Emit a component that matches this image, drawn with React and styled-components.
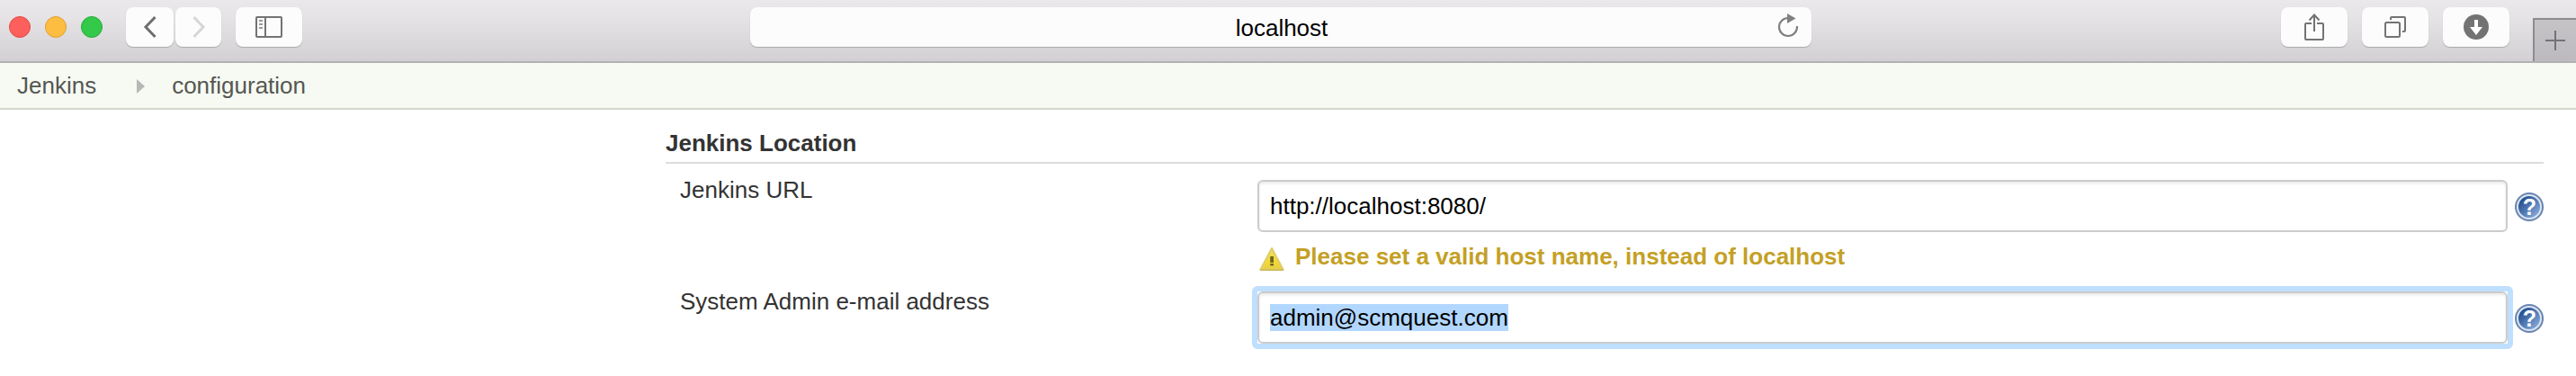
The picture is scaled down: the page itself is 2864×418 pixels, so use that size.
import React from 'react';
import styled, { createGlobalStyle } from 'styled-components';

const GlobalStyle = createGlobalStyle`
  * {
    box-sizing: border-box;
  }
  body {
    margin: 0;
    background: #fff;
    color: #333;
    font-family: "Liberation Sans", Arial, sans-serif;
    font-size: 26px;
    line-height: 30px;
  }
  svg {
    display: block;
  }
`

const SidebarIcon = () => (
    <svg width="30" height="24" viewBox="0 0 30 24" fill="none" stroke="#737373" strokeWidth="2">
        <rect x="1" y="1" width="28" height="22" rx="1" />
        <path d="M11 1V23" />
        <path d="M4 5H8M4 9H8M4 13H8" stroke="#999" />
    </svg>
)

const ReloadIcon = () => (
    <svg width="24" height="28" viewBox="0 0 24 28">
        <path d="M12 5A10 10 0 1 0 22 15V14" fill="none" stroke="#808080" strokeWidth="2.2" />
        <path d="M11 0L20.5 5.5L11 11Z" fill="#808080" />
    </svg>
)

const ShareIcon = () => (
    <svg width="22" height="30" viewBox="0 0 22 30" fill="none" stroke="#737373" strokeWidth="2">
        <path d="M8 11H2Q1 11 1 12V28Q1 29 2 29H20Q21 29 21 28V12Q21 11 20 11H14" />
        <path d="M11 20V2M5.5 7.5L11 1.5L16.5 7.5" />
    </svg>
)

const TabsIcon = () => (
    <svg width="24" height="24" viewBox="0 0 24 24" fill="none" stroke="#737373" strokeWidth="2">
        <rect x="1" y="7" width="16" height="16" rx="1.5" />
        <path d="M7 4V2Q7 1 8 1H22Q23 1 23 2V16Q23 17 22 17H20" />
    </svg>
)

const DownloadIcon = () => (
    <svg width="28" height="28" viewBox="0 0 28 28">
        <circle cx="14" cy="14" r="14" fill="#737373" />
        <path d="M12 6H16V14H21L14 23L7 14H12Z" fill="#fff" />
    </svg>
)

const WarningIcon = () => (
    <svg width="28" height="28" viewBox="0 0 28 28">
        <defs>
            <linearGradient id="warn" x1="0" y1="0" x2="0" y2="1">
                <stop offset="0" stopColor="#efdc6a" />
                <stop offset="0.6" stopColor="#f3da35" />
                <stop offset="1" stopColor="#e8cf42" />
            </linearGradient>
        </defs>
        <path d="M14 2L26.5 25.5H1.5Z" fill="url(#warn)" stroke="#e0cd6a" strokeWidth="2" strokeLinejoin="round" />
        <path d="M1.5 26.2H26.5" stroke="#cdb750" strokeWidth="1.6" strokeLinecap="round" />
        <rect x="12.2" y="11" width="3.8" height="7" fill="#6f6528" />
        <rect x="12.2" y="19" width="3.8" height="2.4" fill="#6f6528" />
    </svg>
)

const HelpIcon = () => (
    <svg width="32" height="32" viewBox="0 0 32 32">
        <defs>
            <linearGradient id="help" x1="0" y1="0" x2="1" y2="1">
                <stop offset="0.15" stopColor="#1f4b8c" />
                <stop offset="0.9" stopColor="#8aaede" />
            </linearGradient>
        </defs>
        <circle cx="16" cy="16" r="16" fill="#6885b1" />
        <circle cx="16" cy="16" r="13" fill="url(#help)" stroke="#dbe4f1" strokeWidth="2" />
        <text x="16.4" y="25.4" textAnchor="middle" fontSize="25" fontWeight="bold" fill="#fff">?</text>
    </svg>
)

export default function App() {
    return (
        <>
            <GlobalStyle />
            <Toolbar>
                <Lights>
                    <Light $fill="#fd605c" $edge="#e2463f" />
                    <Light $fill="#fdbd41" $edge="#dfa033" />
                    <Light $fill="#34c94a" $edge="#27aa35" />
                </Lights>
                <NavGroup>
                    <ToolButton $width={53}>
                        <svg width="16" height="26" viewBox="0 0 16 26" fill="none" stroke="#6e6e6e" strokeWidth="3">
                            <path d="M13.5 2L3 13L13.5 24" />
                        </svg>
                    </ToolButton>
                    <ToolButton $width={51}>
                        <svg width="16" height="26" viewBox="0 0 16 26" fill="none" stroke="#d6d6d6" strokeWidth="3">
                            <path d="M2.5 2L13 13L2.5 24" />
                        </svg>
                    </ToolButton>
                </NavGroup>
                <ToolButton $width={74}><SidebarIcon /></ToolButton>
                <AddressBar>
                    <span />
                    <span>localhost</span>
                    <Reload><ReloadIcon /></Reload>
                </AddressBar>
                <Actions>
                    <ToolButton $width={74}><ShareIcon /></ToolButton>
                    <ToolButton $width={74}><TabsIcon /></ToolButton>
                    <ToolButton $width={74}><DownloadIcon /></ToolButton>
                </Actions>
                <NewTab>
                    <svg width="22" height="22" viewBox="0 0 22 22" stroke="#737275" strokeWidth="2">
                        <path d="M11 0V22M0 11H22" />
                    </svg>
                </NewTab>
            </Toolbar>
            <Breadcrumbs>
                <span>Jenkins</span>
                <svg width="9" height="16" viewBox="0 0 9 16">
                    <path d="M0 0L9 8L0 16Z" fill="#b6b8b6" />
                </svg>
                <span>configuration</span>
            </Breadcrumbs>
            <Section>
                <SectionTitle>Jenkins Location</SectionTitle>
                <Row>
                    <Label>Jenkins URL</Label>
                    <Setting>
                        <Focus><Field>http://localhost:8080/</Field></Focus>
                        <Warning>
                            <WarningIcon />
                            <span>Please set a valid host name, instead of localhost</span>
                        </Warning>
                    </Setting>
                    <Help><HelpIcon /></Help>
                </Row>
                <Row>
                    <Label>System Admin e-mail address</Label>
                    <Setting>
                        <Focus $active>
                            <Field><Selection>admin@scmquest.com</Selection></Field>
                        </Focus>
                    </Setting>
                    <Help><HelpIcon /></Help>
                </Row>
            </Section>
        </>
    )
}

const Toolbar = styled.header`
  display: flex;
  align-items: flex-start;
  height: 70px;
  padding: 8px 0 0 10px;
  background: linear-gradient(#eae8ea, #e5e3e6 30%, #d2d0d3 68px);
  border-bottom: 2px solid #b2b1b3;
`
const Lights = styled.div`
  display: flex;
  gap: 16px;
  margin-top: 10px;
`
const Light = styled.span`
  width: 24px;
  height: 24px;
  border-radius: 50%;
  background: ${props => props.$fill};
  border: 1px solid ${props => props.$edge};
`
const NavGroup = styled.div`
  display: flex;
  gap: 2px;
  margin: 0 16px 0 26px;
`
const ToolButton = styled.button`
  display: flex;
  align-items: center;
  justify-content: center;
  width: ${props => props.$width}px;
  height: 44px;
  padding: 0;
  border: 0;
  border-radius: 8px;
  background: #fcfcfc;
  box-shadow: 0 1px 1px #a9a8aa;
`
const AddressBar = styled.div`
  display: grid;
  grid-template-columns: 1fr auto 1fr;
  align-items: center;
  width: 1180px;
  height: 44px;
  margin-left: 498px;
  padding: 2px 14px 0 16px;
  border-radius: 8px;
  background: #fcfcfc;
  box-shadow: 0 1px 1px #a9a8aa;
  color: #000;
`
const Reload = styled.div`
  justify-self: end;
  margin-top: -4px;
`
const Actions = styled.div`
  display: flex;
  gap: 16px;
  margin-left: 522px;
`
const NewTab = styled.div`
  display: flex;
  align-items: center;
  justify-content: center;
  width: 48px;
  height: 48px;
  margin: 12px 0 0 26px;
  border: solid #8d8b8e;
  border-width: 2px 0 0 2px;
  background: linear-gradient(#c5c3c6, #bcbabe);
`
const Breadcrumbs = styled.nav`
  display: flex;
  align-items: center;
  height: 52px;
  padding: 0 19px;
  background: #f6faf2;
  border-bottom: 2px solid #d3d7cf;
  color: #555753;
  svg {
    margin: 2px 30px 0 45px;
  }
`
const Section = styled.main`
  padding: 22px 36px 0 740px;
`
const SectionTitle = styled.h1`
  height: 38px;
  margin: 0 0 12px;
  border-bottom: 2px solid #ddd;
  font-size: 26px;
  font-weight: bold;
`
const Row = styled.div`
  display: grid;
  grid-template-columns: 652px 1402px 34px;
`
const Label = styled.label`
  padding: 2px 0 0 16px;
`
const Setting = styled.div`
  margin-bottom: 6px;
`
/* the ring keeps square inner corners around the rounded field */
const Focus = styled.div`
  border: 6px solid ${props => (props.$active ? '#bfdfff' : 'transparent')};
  border-radius: 6px;
`
const Field = styled.div`
  height: 58px;
  padding: 12px;
  border: 2px solid #ccc;
  border-radius: 6px;
  background: #fff;
  box-shadow: inset 0 2px 3px rgba(0, 0, 0, 0.09);
  color: #000;
`
const Selection = styled.span`
  display: inline-block;
  background: #b2d7ff;
`
const Warning = styled.div`
  display: flex;
  align-items: center;
  gap: 12px;
  height: 34px;
  margin: 4px 0 10px 8px;
  color: #c4a025;
  font-weight: bold;
  svg {
    margin-top: 5px;
  }
`
const Help = styled.div`
  padding: 20px 0 0 2px;
`
